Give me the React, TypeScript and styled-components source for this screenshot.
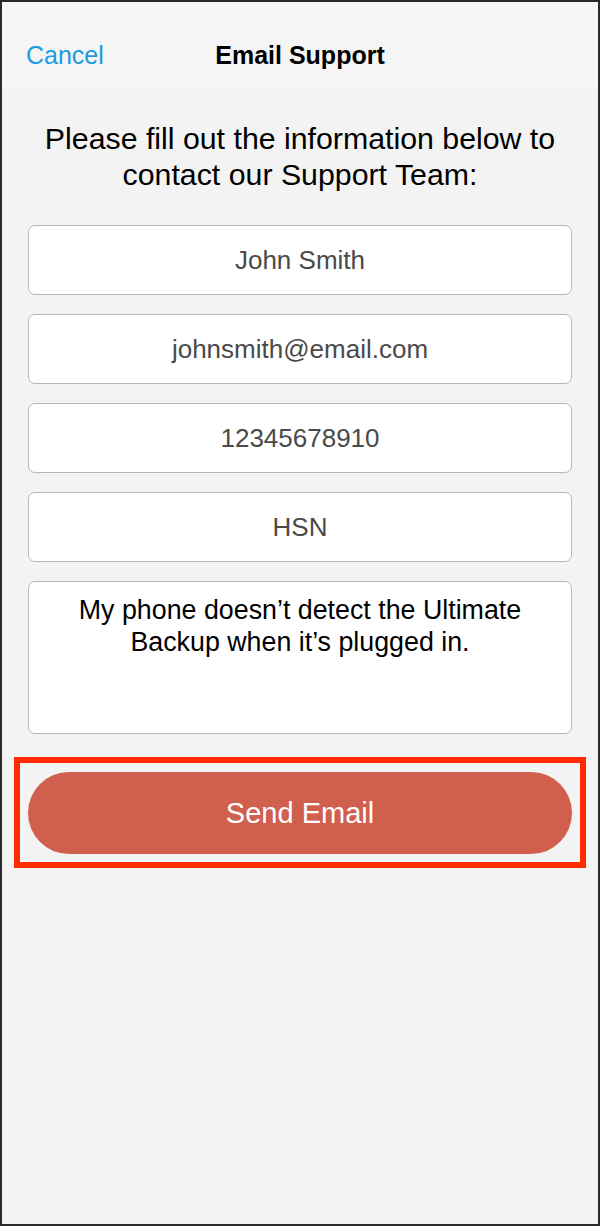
import styled, { createGlobalStyle } from 'styled-components';

const GlobalStyle = createGlobalStyle`
  * {
    box-sizing: border-box;
  }
  body {
    margin: 0;
    font-family: 'Liberation Sans', Arial, sans-serif;
    background: #ffffff;
  }
`;

const Frame = styled.div`
  width: 600px;
  height: 1226px;
  border: 2px solid #2b2b2b;
  background-color: #f3f3f3;
  display: flex;
  flex-direction: column;
`;

const NavBar = styled.header`
  height: 87px;
  flex-shrink: 0;
  background-color: #f5f5f5;
  display: grid;
  grid-template-columns: 1fr auto 1fr;
  align-items: center;
  padding: 0 24px;
`;

const CancelBtn = styled.button`
  justify-self: start;
  border: none;
  background: none;
  padding: 0;
  margin-top: 20px;
  font-family: inherit;
  font-size: 25px;
  color: #1b9be0;
  cursor: pointer;
`;

const NavTitle = styled.h1`
  margin: 20px 0 0;
  font-size: 25px;
  font-weight: 700;
  color: #000000;
`;

const Content = styled.main`
  padding: 32px 26px 0;
  display: flex;
  flex-direction: column;
`;

const Intro = styled.p`
  margin: 0 0 32px;
  text-align: center;
  font-size: 30.3px;
  line-height: 36px;
  color: #000000;
`;

const Fields = styled.div`
  display: flex;
  flex-direction: column;
  gap: 19px;
`;

const Field = styled.div<{ $tall?: boolean }>`
  height: ${(p) => (p.$tall ? '153px' : '70px')};
  background-color: #ffffff;
  border: 1.5px solid #b7b7b7;
  border-radius: 7px;
  display: flex;
  justify-content: center;
  align-items: ${(p) => (p.$tall ? 'flex-start' : 'center')};
  padding: ${(p) => (p.$tall ? '12px 30px' : '0 16px')};
  text-align: center;
  font-size: ${(p) => (p.$tall ? '26.8px' : '26px')};
  line-height: 32px;
  color: ${(p) => (p.$tall ? '#000000' : '#4a4a4a')};
`;

const Highlight = styled.div`
  margin: 23px -14px 0;
  border: 6px solid #ff2a00;
  padding: 9px 8px 8px;
`;

const SendButton = styled.button`
  display: block;
  width: 100%;
  height: 82px;
  border: none;
  border-radius: 41px;
  background-color: #d15f4d;
  color: #ffffff;
  font-family: inherit;
  font-size: 29px;
  cursor: pointer;
`;

const fields = ['John Smith', 'johnsmith@email.com', '12345678910', 'HSN'];

export default function App() {
  return (
    <>
      <GlobalStyle />
      <Frame>
        <NavBar>
          <CancelBtn>Cancel</CancelBtn>
          <NavTitle>Email Support</NavTitle>
          <span />
        </NavBar>
        <Content>
          <Intro>
            Please fill out the information below to
            <br />
            contact our Support Team:
          </Intro>
          <Fields>
            {fields.map((value) => (
              <Field key={value}>{value}</Field>
            ))}
            <Field $tall>My phone doesn’t detect the Ultimate Backup when it’s plugged in.</Field>
          </Fields>
          <Highlight>
            <SendButton>Send Email</SendButton>
          </Highlight>
        </Content>
      </Frame>
    </>
  );
}
